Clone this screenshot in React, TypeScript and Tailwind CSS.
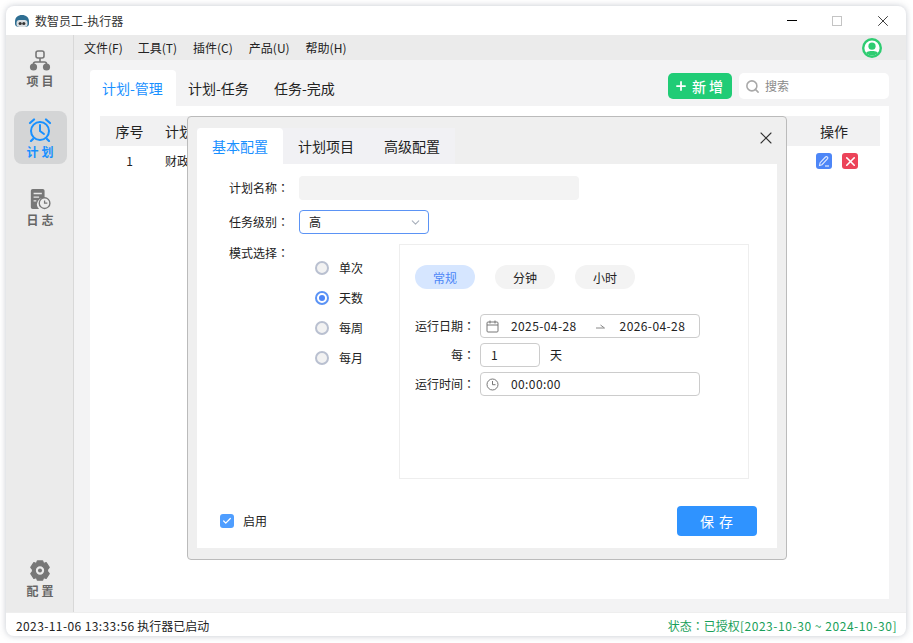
import { ChevronDown, Search, Plus, X, Check } from 'lucide-react';

const font = { fontFamily: '"Noto Sans CJK SC", "Noto Sans", sans-serif' };

const LogoIcon = () => (
  <svg width="16" height="14" viewBox="0 0 16 14">
    <path d="M1 8 C1 3 4 1 8 1 C12 1 15 3 15 8 L15 10 C15 12 13 13 11 13 L5 13 C3 13 1 12 1 10 Z" fill="#2f6f93" />
    <rect x="2.5" y="6" width="11" height="7" rx="3" fill="#d9dde0" />
    <circle cx="6.2" cy="9.5" r="1.6" fill="#333" />
    <circle cx="9.8" cy="9.5" r="1.6" fill="#333" />
  </svg>
);

const ProjectIcon = () => (
  <svg width="22" height="21" viewBox="0 0 22 21" fill="none">
    <rect x="7" y="1" width="8" height="7" rx="2" stroke="#777" strokeWidth="1.6" />
    <path d="M11 8v4M4.500 16v-2a2 2 0 0 1 2-2h9a2 2 0 0 1 2 2v2" stroke="#777" strokeWidth="1.6" />
    <circle cx="4.500" cy="17" r="3.600" fill="#777" />
    <circle cx="17.500" cy="17" r="3.600" fill="#777" />
  </svg>
);

const AlarmIcon = () => (
  <svg width="24" height="24" viewBox="0 0 24 24" fill="none" stroke="#1890ff" strokeWidth="2" strokeLinecap="round">
    <circle cx="12" cy="13" r="9" />
    <path d="M12 7v6l4 3" />
    <path d="M2 5l4-3.5M22 5l-4-3.500M5 21l-2 2M19 21l2 2" strokeWidth="2.2" />
  </svg>
);

const LogIcon = () => (
  <svg width="22" height="22" viewBox="0 0 24 24" fill="none">
    <path d="M2 3a2 2 0 0 1 2-2h11a2 2 0 0 1 2 2v8a7 7 0 0 0-6 12H4a2 2 0 0 1-2-2Z" fill="#777" />
    <path d="M5 6h9M5 10h6M5 14h3" stroke="#e8e8e8" strokeWidth="1.5" />
    <circle cx="17" cy="16.5" r="5.8" stroke="#777" strokeWidth="1.5" />
    <path d="M17 13.5v3h3" stroke="#777" strokeWidth="1.4" />
  </svg>
);

const GearIcon = () => (
  <svg width="22" height="21" viewBox="0 0 24 24">
    <path
      fillRule="evenodd"
      d="M9 1h6l1 3 3-1 3.500 5.500-2 2.500 0 2 2 2.500L19 21l-3-1-1 3H9l-1-3-3 1-3.500-5.500 2-2.500 0-2-2-2.500L5 3l3 1ZM12 6.500a5.500 5.500 0 1 0 0 11 5.500 5.500 0 0 0 0-11Z"
      fill="#777"
      stroke="#777"
      strokeLinejoin="round"
      strokeWidth="1.500"
    />
    <circle cx="12" cy="12" r="2.300" fill="#777" />
  </svg>
);

const UserIcon = () => (
  <svg width="20" height="20" viewBox="0 0 20 20">
    <circle cx="10" cy="10" r="10" fill="#2ecc71" />
    <circle cx="10" cy="10" r="7.600" fill="#fff" />
    <clipPath id="userClip">
      <circle cx="10" cy="10" r="7.600" />
    </clipPath>
    <g clipPath="url(#userClip)" fill="#2ecc71">
      <circle cx="10" cy="8.200" r="3.600" />
      <path d="M3 18c0-4 3-5 7-5s7 1 7 5Z" />
    </g>
  </svg>
);

const CalendarIcon = () => (
  <svg width="13" height="13" viewBox="0 0 13 13" fill="none" stroke="#777" strokeWidth="1">
    <rect x="1" y="2" width="11" height="10" rx="1" />
    <path d="M1 5h11M4 0.500v3M9 0.500v3" />
  </svg>
);

const ClockIcon = () => (
  <svg width="13" height="13" viewBox="0 0 13 13" fill="none" stroke="#777" strokeWidth="1">
    <circle cx="6.500" cy="6.500" r="5.500" />
    <path d="M6.500 3v3.700h3" />
  </svg>
);

const RangeArrow = () => (
  <svg width="9" height="5" viewBox="0 0 9 5" fill="none" stroke="#888" strokeWidth="1">
    <path d="M0 4h8.500L4.500 1" />
  </svg>
);

const PencilIcon = () => (
  <svg width="16" height="16" viewBox="0 0 16 16" fill="none">
    <rect width="16" height="16" rx="3" fill="#4d86f7" />
    <path d="M3.500 12.500l.6-2.800 5.400-5.700a1.300 1.300 0 0 1 1.900 0 1.300 1.300 0 0 1 0 1.900L6 11.700Z" stroke="#dfe9ff" strokeWidth="1.100" />
    <path d="M9 13h4" stroke="#fff" strokeWidth="1.200" />
  </svg>
);

// full-width colon sits in the middle of its box in the TC face, like the reference
const Colon = () => <span className="font-['Noto_Sans_CJK_TC']">：</span>;

const SideItem = ({ icon, label, active }: { icon: React.ReactNode; label: string; active?: boolean }) => (
  <div
    className={`flex h-[53px] w-[53px] flex-col items-center rounded-lg pt-[7px] ${active ? 'bg-[#d4d5d6] text-[#1890ff]' : 'text-[#666666]'}`}
  >
    {icon}
    <span className="mt-[2px] mr-[-3px] text-[12px] leading-[16px] font-bold tracking-[3px]">{label}</span>
  </div>
);

const Radio = ({ label, checked }: { label: string; checked?: boolean }) => (
  <div className="flex h-[14px] items-center">
    <span
      className={`flex h-[14px] w-[14px] items-center justify-center rounded-full border-2 ${checked ? 'border-[#5b93f5] bg-white' : 'border-[#b9c0d0] bg-[#f2f2f2]'}`}
    >
      {checked && <span className="h-[6px] w-[6px] rounded-full bg-[#4d86f7]" />}
    </span>
    <span className="ml-[10px] text-[12px] text-[#222222]">{label}</span>
  </div>
);

const Pill = ({ label, active }: { label: string; active?: boolean }) => (
  <div
    className={`flex h-[24px] w-[60px] items-center justify-center rounded-full pt-[1px] text-[12px] ${active ? 'bg-[#d6e6ff] text-[#4d86f7]' : 'bg-[#f3f3f3] text-[#222222]'}`}
  >
    {label}
  </div>
);

const FieldRow = ({ label, children }: { label: string; children: React.ReactNode }) => (
  <div className="flex h-[24px] items-center">
    <span className="w-[60px] whitespace-nowrap text-right text-[12px] text-[#222222]">
      {label}
      <Colon />
    </span>
    <div className="ml-[5px] flex items-center">{children}</div>
  </div>
);

export default function App() {
  return (
    <div className="h-[643px] w-[913px] overflow-hidden bg-white pt-[6px] pl-[6px]" style={font}>
      <div className="relative flex h-[630px] w-[900px] flex-col overflow-hidden rounded-[8px] bg-white shadow-[0_0_6px_rgba(90,100,120,0.35)]">
        {/* title bar */}
        <div className="flex h-[29px] shrink-0 items-center">
          <div className="ml-[8px]">
            <LogoIcon />
          </div>
          <span className="ml-[5px] text-[12px] text-[#333333]">数智员工-执行器</span>
          <div className="ml-auto flex items-center">
            <div className="h-[1px] w-[10px] bg-black" />
            <div className="ml-[35px] h-[10px] w-[10px] border border-[#c4c4c4]" />
            <X className="mr-[14px] ml-[32px] h-[18px] w-[18px] text-black" strokeWidth={1} />
          </div>
        </div>

        <div className="flex min-h-0 flex-1">
          {/* sidebar */}
          <div className="flex w-[68px] shrink-0 flex-col items-center border-r border-[#d8d8d8] bg-[#ebebeb] pt-[8px] pb-[6px]">
            <div className="ml-[1px] flex flex-col">
              <SideItem icon={<ProjectIcon />} label="项目" />
              <div className="mt-[15px]">
                <SideItem icon={<AlarmIcon />} label="计划" active />
              </div>
              <div className="mt-[17px]">
                <SideItem icon={<LogIcon />} label="日志" />
              </div>
            </div>
            <div className="mt-auto ml-[1px]">
              <SideItem icon={<GearIcon />} label="配置" />
            </div>
          </div>

          <div className="flex min-w-0 flex-1 flex-col bg-[#f3f3f4]">
            {/* menu */}
            <div className="flex h-[25px] shrink-0 items-center bg-[#ebebeb] pl-[10px] text-[12px] text-[#222222]">
              <span>文件(F)</span>
              <span className="ml-[15px]">工具(T)</span>
              <span className="ml-[16px]">插件(C)</span>
              <span className="ml-[16px]">产品(U)</span>
              <span className="ml-[16px]">帮助(H)</span>
              <div className="mr-[24px] ml-auto">
                <UserIcon />
              </div>
            </div>

            {/* content */}
            <div className="ml-[16px] flex min-h-0 w-[799px] flex-1 flex-col pt-[10px] pb-[13px]">
              <div className="flex h-[36px] shrink-0 text-[14px] text-[#222222]">
                <div className="flex h-[36px] w-[86px] items-center rounded-t-[4px] bg-white pl-[12px] text-[#1890ff]">计划-管理</div>
                <div className="flex h-[36px] w-[86px] items-center pl-[12px]">计划-任务</div>
                <div className="flex h-[36px] w-[86px] items-center pl-[12px]">任务-完成</div>
                <div className="mt-[3px] ml-auto flex h-[26px] w-[64px] items-center rounded-[5px] bg-[#20cc76] pl-[6px] font-medium tracking-[3px] text-white">
                  <Plus className="mr-[4px] h-[14px] w-[14px]" strokeWidth={3} />
                  新增
                </div>
                <div className="mt-[3px] ml-[7px] flex h-[26px] w-[150px] items-center rounded-[5px] bg-white pl-[6px] text-[12px] text-[#8a8a8a]">
                  <Search className="h-[15px] w-[15px] text-[#a9a9a9]" strokeWidth={2.5} />
                  <span className="ml-[5px]">搜索</span>
                </div>
              </div>

              <div className="min-h-0 flex-1 bg-white pt-[10px] pr-[9px] pl-[10px]">
                <div className="flex h-[30px] items-center bg-[#f1f1f2] text-[14px] text-[#222222]">
                  <span className="w-[59px] text-center">序号</span>
                  <span className="ml-[6px]">计划名称</span>
                  <span className="mr-[18px] ml-auto w-[56px] text-center">操作</span>
                </div>
                <div className="flex h-[30px] items-center text-[12px] text-[#222222]">
                  <span className="w-[59px] text-center">1</span>
                  <span className="ml-[6px]">财政局报表</span>
                  <div className="mr-[22px] ml-auto flex gap-[10px]">
                    <PencilIcon />
                    <div className="flex h-[16px] w-[16px] items-center justify-center rounded-[3px] bg-[#ec4359]">
                      <X className="h-[15px] w-[15px] text-white" strokeWidth={2.5} />
                    </div>
                  </div>
                </div>
              </div>
            </div>
          </div>
        </div>

        {/* status bar */}
        <div className="flex h-[24px] shrink-0 items-center justify-between border-t border-[#eeeeee] pt-[2px] pr-[9px] pl-[10px] text-[12px]">
          <span className="text-[#222222]">
            <span className="tracking-[0.4px]">2023-11-06 13:33:56</span> 执行器已启动
          </span>
          <span className="text-[#1a9f5a]">
            状态
            <Colon />
            已授权<span className="tracking-[0.55px]">[2023-10-30 ~ 2024-10-30]</span>
          </span>
        </div>

        {/* modal */}
        <div className="absolute top-[110px] left-[181px] flex h-[444px] w-[600px] flex-col rounded-[4px] border border-[#bbbbbb] bg-[#efefef] px-[9px] pt-[11px] pb-[11px]">
          <X className="absolute top-[11px] right-[10px] h-[20px] w-[20px] text-[#333333]" strokeWidth={1.3} />
          <div className="flex h-[36px] w-[258px] shrink-0 bg-[#f1f1f4] text-[14px] text-[#222222]">
            <div className="flex w-[86px] items-center rounded-t-[4px] bg-white pl-[15px] text-[#1890ff]">基本配置</div>
            <div className="flex w-[86px] items-center pl-[15px]">计划项目</div>
            <div className="flex w-[86px] items-center pl-[15px]">高级配置</div>
          </div>
          <div className="flex min-h-0 flex-1 flex-col bg-white pt-[12px] pb-[12px]">
            <div className="flex h-[24px] items-center">
              <span className="ml-[32px] w-[60px] whitespace-nowrap text-[12px] text-[#222222]">
                计划名称
                <Colon />
              </span>
              <div className="ml-[10px] h-[24px] w-[280px] rounded-[4px] bg-[#f3f3f3]" />
            </div>
            <div className="mt-[10px] flex h-[24px] items-center">
              <span className="ml-[32px] w-[60px] whitespace-nowrap text-[12px] text-[#222222]">
                任务级别
                <Colon />
              </span>
              <div className="ml-[10px] flex h-[24px] w-[130px] items-center rounded-[4px] border border-[#5b93f5] pr-[6px] pl-[9px] text-[12px] text-[#222222]">
                高
                <ChevronDown className="ml-auto h-[13px] w-[13px] text-[#a9b0bc]" strokeWidth={2} />
              </div>
            </div>
            <div className="mt-[10px] flex min-h-0">
              <span className="ml-[32px] w-[60px] whitespace-nowrap text-[12px] leading-[18px] text-[#222222]">
                模式选择
                <Colon />
              </span>
              <div className="mt-[17px] ml-[26px] flex w-[84px] flex-col gap-[16px]">
                <Radio label="单次" />
                <Radio label="天数" checked />
                <Radio label="每周" />
                <Radio label="每月" />
              </div>
              <div className="h-[235px] w-[350px] border border-[#eeeeee] pt-[20px] pl-[15px]">
                <div className="flex gap-[20px]">
                  <Pill label="常规" active />
                  <Pill label="分钟" />
                  <Pill label="小时" />
                </div>
                <div className="mt-[25px] flex flex-col gap-[5px]">
                  <FieldRow label="运行日期">
                    <div className="flex h-[24px] w-[220px] items-center rounded-[4px] border border-[#cccccc] pl-[5px] text-[12px] tracking-[0.4px] text-[#222222]">
                      <CalendarIcon />
                      <span className="ml-[12px]">2025-04-28</span>
                      <span className="ml-[19px]">
                        <RangeArrow />
                      </span>
                      <span className="ml-[15px]">2026-04-28</span>
                    </div>
                  </FieldRow>
                  <FieldRow label="每">
                    <div className="flex h-[24px] w-[60px] items-center rounded-[4px] border border-[#cccccc] pl-[10px] text-[12px] text-[#222222]">
                      1
                    </div>
                    <span className="ml-[10px] text-[12px] text-[#222222]">天</span>
                  </FieldRow>
                  <FieldRow label="运行时间">
                    <div className="flex h-[24px] w-[220px] items-center rounded-[4px] border border-[#cccccc] pl-[5px] text-[12px] tracking-[0.4px] text-[#222222]">
                      <ClockIcon />
                      <span className="ml-[12px]">00:00:00</span>
                    </div>
                  </FieldRow>
                </div>
              </div>
            </div>
            <div className="mt-auto flex items-center pr-[20px] pl-[23px]">
              <span className="flex h-[14px] w-[14px] items-center justify-center rounded-[3px] bg-[#4f9eff]">
                <Check className="h-[10px] w-[10px] text-white" strokeWidth={3} />
              </span>
              <span className="ml-[9px] text-[12px] text-[#222222]">启用</span>
              <div className="ml-auto flex h-[30px] w-[80px] items-center justify-center rounded-[4px] bg-[#2f93ff] text-[14px] tracking-[1px] text-white">
                保 存
              </div>
            </div>
          </div>
        </div>
      </div>
    </div>
  );
}
